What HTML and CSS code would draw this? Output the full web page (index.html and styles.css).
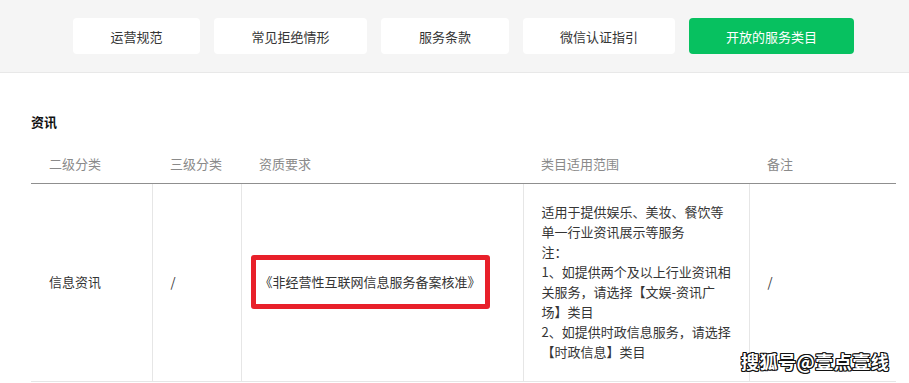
FILE: index.html
```html
<!DOCTYPE html>
<html lang="zh-CN">
<head>
<meta charset="utf-8">
<title>开放的服务类目</title>
<link rel="stylesheet" href="styles.css">
</head>
<body>
<nav class="topbar">
  <a class="tab tab-1">运营规范</a>
  <a class="tab tab-2">常见拒绝情形</a>
  <a class="tab tab-3">服务条款</a>
  <a class="tab tab-4">微信认证指引</a>
  <a class="tab tab-5 active">开放的服务类目</a>
</nav>
<main class="content">
  <h2 class="section-title">资讯</h2>
  <table class="cat-table">
    <colgroup>
      <col class="c1"><col class="c2"><col class="c3"><col class="c4"><col class="c5">
    </colgroup>
    <thead>
      <tr>
        <th>二级分类</th>
        <th>三级分类</th>
        <th>资质要求</th>
        <th>类目适用范围</th>
        <th>备注</th>
      </tr>
    </thead>
    <tbody>
      <tr>
        <td>信息资讯</td>
        <td>/</td>
        <td class="qual"><span class="mark">《非经营性互联网信息服务备案核准》</span></td>
        <td class="scope">适用于提供娱乐、美妆、餐饮等<br>单一行业资讯展示等服务<br>注：<br>1、如提供两个及以上行业资讯相<br>关服务，请选择【文娱-资讯广<br>场】类目<br>2、如提供时政信息服务，请选择<br>【时政信息】类目</td>
        <td>/</td>
      </tr>
    </tbody>
  </table>
</main>
<div class="watermark">搜狐号@壹点壹线</div>
</body>
</html>
```

FILE: styles.css
```css
* { box-sizing: border-box; }

html, body {
  margin: 0;
  padding: 0;
  background: #ffffff;
  font-family: "Noto Sans CJK SC", "Microsoft YaHei", sans-serif;
  font-size: 13px;
  color: #333333;
}

body { position: relative; width: 909px; height: 383px; overflow: hidden; }

.topbar {
  display: flex;
  gap: 14px;
  height: 73px;
  padding: 18px 0 0 73px;
  background: #f5f5f5;
  border-bottom: 1px solid #e8e8e8;
}

.tab {
  display: flex;
  align-items: center;
  justify-content: center;
  height: 36px;
  background: #ffffff;
  border-radius: 4px;
  color: #353535;
  font-size: 13px;
  text-decoration: none;
}
.tab-1 { width: 127px; }
.tab-2 { width: 153px; }
.tab-3 { width: 128px; }
.tab-4 { width: 152px; }
.tab-5 { width: 165px; }
.tab.active { background: #07c160; color: #ffffff; }

.content {
  padding: 39px 0 0 31px;
}

.section-title {
  margin: 0;
  font-size: 13px;
  line-height: 20px;
  font-weight: bold;
  color: #111111;
}

.cat-table {
  margin-top: 12px;
  width: 865px;
  table-layout: fixed;
  border-collapse: collapse;
  font-size: 13px;
  line-height: 20px;
}
.c1 { width: 121px; }
.c2 { width: 89px; }
.c3 { width: 282px; }
.c4 { width: 226px; }
.c5 { width: 147px; }

.cat-table th {
  text-align: left;
  font-weight: normal;
  color: #8a8a8a;
  padding: 10px 18px 9px 18px;
  border-bottom: 1px solid #8f8f8f;
}

.cat-table td {
  padding: 18px 18px 19px 18px;
  vertical-align: middle;
  color: #353535;
  border-bottom: 1px solid #e6e6e6;
}
.cat-table td + td { border-left: 1px solid #e6e6e6; }

.cat-table td.qual { padding-left: 9px; }
.cat-table td.scope { white-space: nowrap; }

.mark {
  display: inline-block;
  padding: 12px 4px;
  border: 5px solid #e8202a;
  border-radius: 3px;
  line-height: 20px;
}

.watermark {
  position: absolute;
  left: 741px;
  top: 349px;
  font-size: 18px;
  line-height: 24px;
  font-weight: bold;
  color: #ffffff;
  letter-spacing: 0.5px;
  text-shadow:
    1px 0 0 #111, -1px 0 0 #111, 0 1px 0 #111, 0 -1px 0 #111,
    1px 1px 0 #111, -1px -1px 0 #111, 1px -1px 0 #111, -1px 1px 0 #111;
}
```
